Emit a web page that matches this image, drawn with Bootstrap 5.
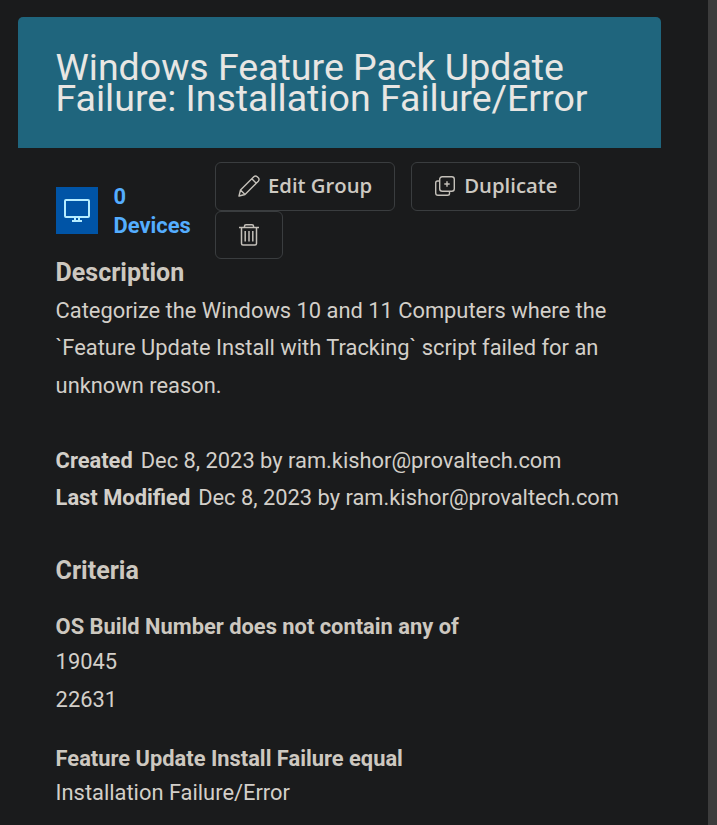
<!DOCTYPE html>
<html lang="en" data-bs-theme="dark">
<head>
<meta charset="utf-8">
<title>Windows Feature Pack Update</title>
<link href="https://cdn.jsdelivr.net/npm/bootstrap@5.3.0/dist/css/bootstrap.min.css" rel="stylesheet">
<style>
body{background:#1a1b1c;color:#d3cfc9;font-family:Roboto,sans-serif;font-size:21.87px;line-height:37.5px}
.page{height:825px}
.rail{width:9px;background:#3c3c3c}
.panel{width:643px;margin:17px 0 0 18px}
.banner{height:131px;background:#1f657d;border-radius:5px 5px 0 0;padding:35px 37.5px 0}
.banner h1{font-size:37.5px;line-height:31px;font-weight:400;color:#e8e6e3}
.content{padding:14px 0 0 37.6px}
.toolbar-row{height:91px}
.devices{width:159.4px;padding-top:20px;color:#54adff;font-weight:700;line-height:29px}
.tile{width:42px;height:47px;margin-top:5px;background:#0054a6}
.actions{column-gap:16px}
.btn-tool{font:600 20.3px/28px "Open Sans",sans-serif;height:49px;border:1px solid #3a3d3f;border-radius:6px;color:#cdc9c2;padding:0 22px 2px;gap:8px}
.btn-tool span{padding-bottom:2px}
.btn-bin{height:48px;width:68px;padding-bottom:0}
h2{font-size:25px;line-height:37.5px;font-weight:700;color:#cdc8c0}
.desc-title{margin-top:1px}
.meta{padding-top:37.5px}
.criteria-title{margin-top:35.8px}
.rule-name{font-weight:700;line-height:30.75px;color:#cdc8c0}
.rule{margin-top:25.3px}
.rule-first{margin-top:22.7px}
</style>
<script src="https://cdn.jsdelivr.net/npm/bootstrap@5.3.0/dist/js/bootstrap.bundle.min.js"></script>
</head>
<body class="overflow-hidden">
<div class="page d-flex justify-content-between overflow-hidden">
  <main class="panel">
    <header class="banner"><h1 class="m-0">Windows Feature Pack Update<br>Failure: Installation Failure/Error</h1></header>
    <div class="content">
      <div class="toolbar-row d-flex">
        <div class="devices d-flex align-items-start flex-shrink-0">
          <span class="tile d-flex align-items-center justify-content-center me-3">
            <svg width="26" height="24" viewBox="0 0 26 24" fill="none" stroke="#b5ecff" stroke-width="2"><rect x="1" y="1" width="24" height="17" rx="1"/><path d="M11 18v4M15 18v4"/><path d="M8 22h10"/></svg>
          </span>
          <span>0<br>Devices</span>
        </div>
        <div class="actions d-flex flex-wrap align-content-start">
          <button class="btn btn-tool d-flex align-items-center">
            <svg width="22" height="22" viewBox="0 0 22 22" fill="none" stroke="#c4c0b9" stroke-width="1.400" stroke-linejoin="round"><path d="M1 21 2.500 15 15.800 1.700Q17.500.2 19.200 1.700L20.300 2.800Q21.800 4.500 20.300 6.200L7 19.500ZM2.500 15 7 19.500M13.800 3.700 18.300 8.200"/></svg>
            <span>Edit Group</span>
          </button>
          <button class="btn btn-tool d-flex align-items-center">
            <svg width="22" height="22" viewBox="0 0 22 22" fill="none" stroke="#c4c0b9" stroke-width="1.400"><rect x="5.700" y="1.700" width="14.600" height="14.600" rx="2.500"/><path d="M5.700 6H3.500Q1.700 6 1.700 8V18Q1.700 20.300 4 20.300H13.500Q15.500 20.300 15.500 18.500V16.300M13 6.300v5.400M10.300 9h5.400"/></svg>
            <span>Duplicate</span>
          </button>
          <button class="btn btn-tool btn-bin d-flex align-items-center justify-content-center" aria-label="Delete">
            <svg class="flex-shrink-0" width="22" height="24" viewBox="0 0 22 24" fill="none" stroke="#c4c0b9" stroke-width="1.500"><path d="M1 4.500H21M6.500 4.500V3Q6.500 1.700 8 1.700H14Q15.500 1.700 15.500 3V4.500M3.500 4.500V20.500Q3.500 22 5 22H17Q18.500 22 18.500 20.500V4.500M7.200 8V18.500M11 8V18.500M14.800 8V18.500"/></svg>
          </button>
        </div>
      </div>
      <h2 class="desc-title mb-0">Description</h2>
      <p class="mb-0">Categorize the Windows 10 and 11 Computers where the<br>`Feature Update Install with Tracking` script failed for an<br>unknown reason.</p>
      <div class="meta">
        <div><strong class="me-2">Created</strong>Dec 8, 2023 by ram.kishor@provaltech.com</div>
        <div><strong class="me-2">Last Modified</strong>Dec 8, 2023 by ram.kishor@provaltech.com</div>
      </div>
      <h2 class="criteria-title mb-0">Criteria</h2>
      <section class="rule-first">
        <div class="rule-name">OS Build Number does not contain any of</div>
        <div>19045</div>
        <div>22631</div>
      </section>
      <section class="rule">
        <div class="rule-name">Feature Update Install Failure equal</div>
        <div>Installation Failure/Error</div>
      </section>
    </div>
  </main>
  <div class="rail"></div>
</div>
</body>
</html>
